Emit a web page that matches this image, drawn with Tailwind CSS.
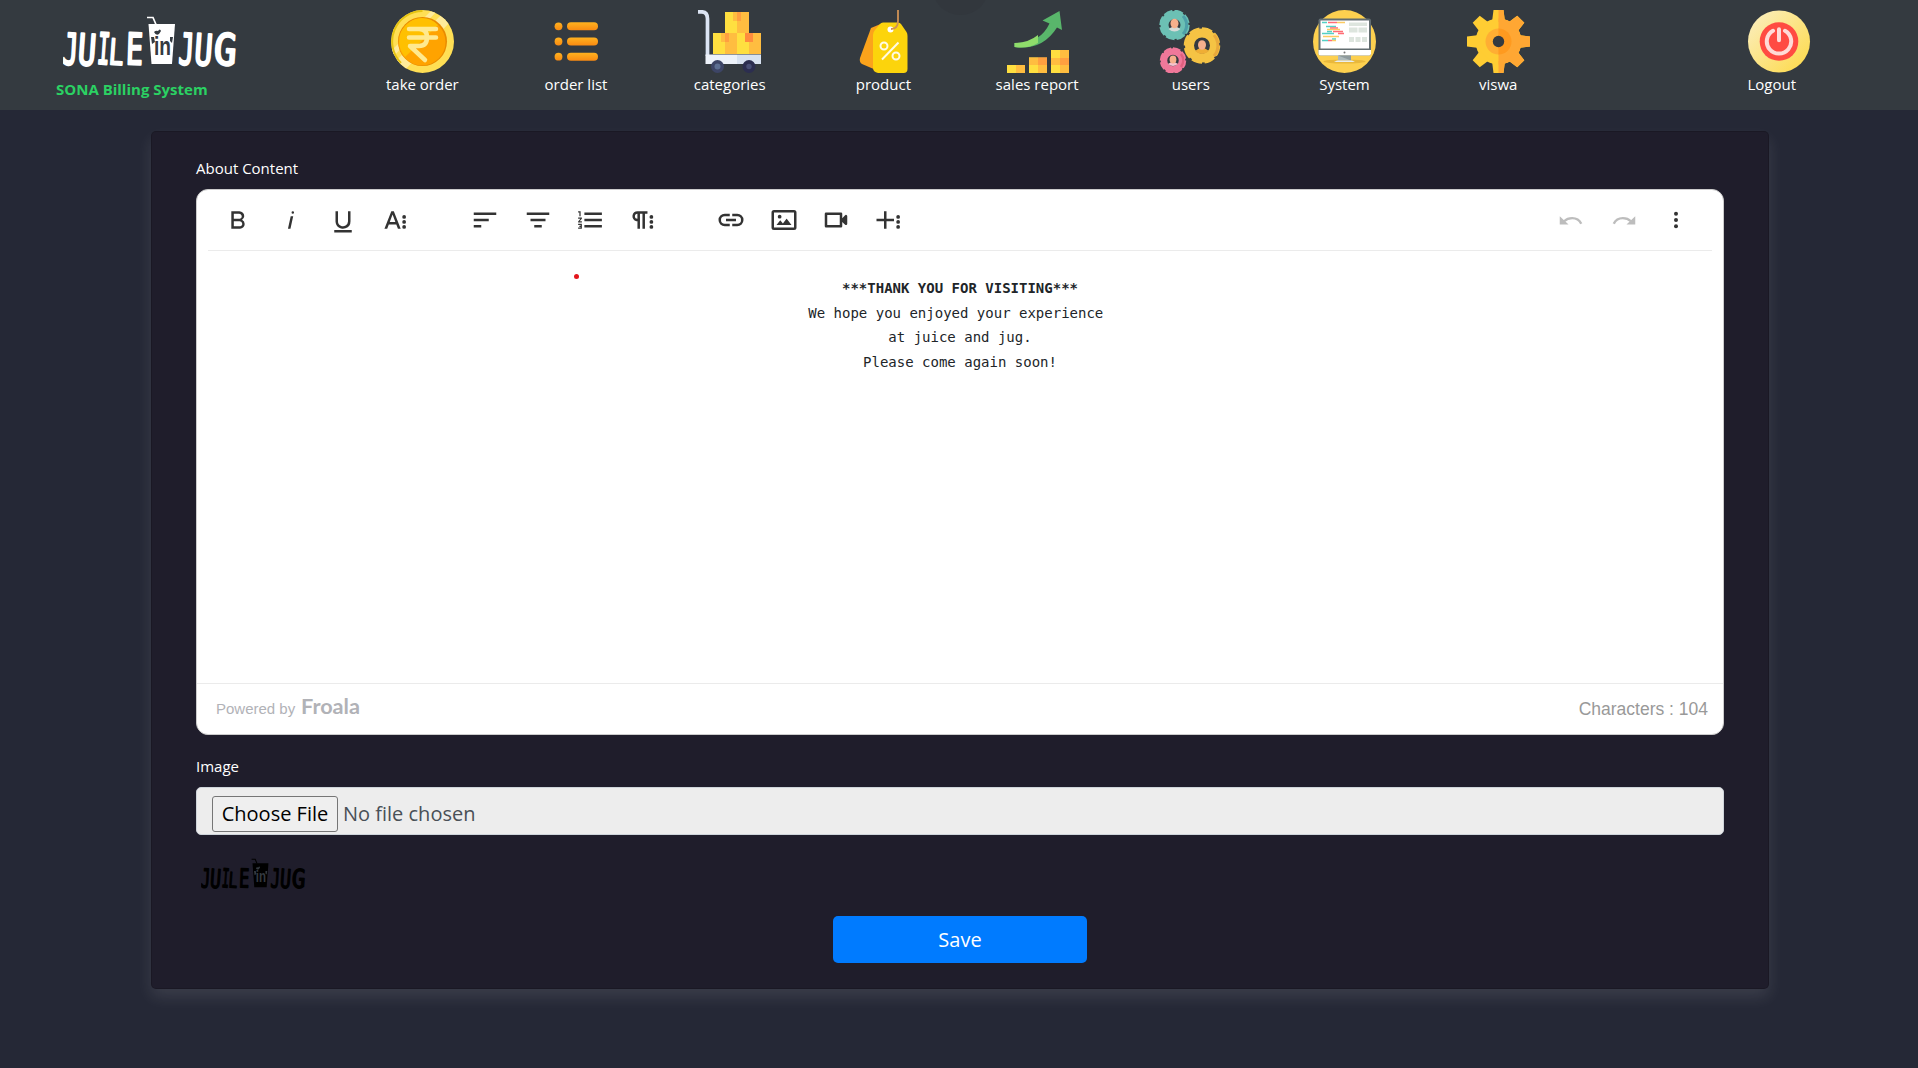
<!DOCTYPE html>
<html lang="en">
<head>
<meta charset="utf-8">
<title>SONA Billing System</title>
<script src="https://cdn.jsdelivr.net/npm/@tailwindcss/browser@4"></script>
</head>
<body class="h-[1068px] overflow-hidden bg-[#252836] font-['Open_Sans',sans-serif] text-[15px] text-white">

<svg class="hidden">
  <defs>
    <symbol id="logo" viewBox="0 0 176 52">
      <g fill="currentColor" stroke="currentColor" stroke-width="2.400" stroke-linejoin="round" font-family="DejaVu Sans Mono" font-size="43">
        <text transform="translate(-1 48) rotate(3) scale(.6 1)">J</text>
        <text transform="translate(14 48.500) rotate(4) scale(.7 1)">U</text>
        <text transform="translate(33.500 47.500) rotate(4) scale(.48 1)">I</text>
        <text transform="translate(45 48) rotate(4) scale(.58 .82)">L</text>
        <text transform="translate(62.500 48) rotate(2) scale(.66 1)">E</text>
        <text transform="translate(115 48) rotate(3) scale(.6 1)">J</text>
        <text transform="translate(130.500 48.500) rotate(4) scale(.7 1)">U</text>
        <text transform="translate(150 48) rotate(4) scale(.88 1)">G</text>
      </g>
      <path d="M84 1.500h6l3 7" fill="none" stroke="currentColor" stroke-width="1.700"/>
      <path d="M85.500 8H112l-3 40H88.500z" fill="currentColor"/>
      <g class="fill-[#343a40]">
        <path d="M91 16q2-2 4-1 2-3 3 0l-2 3q-3 2-5-2zM88 21l3 0 1 5-3 2zM107 21h3l-1 6-2-2z"/>
        <text x="91" y="39" font-family="Liberation Sans" font-weight="bold" font-size="26" textLength="17" lengthAdjust="spacingAndGlyphs">in</text>
      </g>
    </symbol>
  </defs>
</svg>

<header class="relative flex h-[110px] overflow-hidden bg-[#343a40]">
  <span class="absolute left-[932px] top-[-42px] size-[57px] rounded-full bg-[#32373d]"></span>
  <div class="w-[345.5px] shrink-0 pl-14 pt-4">
    <svg class="ml-[7px] h-[52px] w-[176px]"><use href="#logo"/></svg>
    <p class="mt-[10px] text-[15px] font-bold leading-[22px] text-[#2bd163]">SONA Billing System</p>
  </div>
  <nav class="relative flex shrink-0 pt-[10px] leading-[22px]">
    <a class="flex w-[153.7px] flex-col items-center">
      <svg class="size-[63px]" viewBox="0 0 63 63">
        <defs><clipPath id="coin"><circle cx="31.500" cy="31.500" r="31.500"/></clipPath></defs>
        <g clip-path="url(#coin)">
          <path fill="#ffdf55" d="M0 0h63v63H0z"/><path fill="#ffeb9b" d="M41 0l6 0L0 49v-8zM50 5l8 8L14 60l-9-9z"/>
          <path fill="none" stroke="#e6c412" stroke-width="2" d="M31.500 1A30.500 30.500 0 0 0 10 53"/>
        </g>
        <circle cx="31.500" cy="31.500" r="24.500" fill="#e98b00"/><circle cx="31" cy="32" r="23.500" fill="#ffa300"/>
        <path fill="#ffc000" d="M31 8a23.500 23.500 0 0 0-17 39L47 15A23 23 0 0 0 31 8z"/>
        <g fill="none" stroke="#ffe98f" stroke-width="4.500" stroke-linecap="round" stroke-linejoin="round"><path d="M18 19h27M18 27.500h27M18 19h10q8 0 8 8.500t-8 8.500H19l15 14"/></g>
      </svg>take order</a>
    <a class="flex w-[153.7px] flex-col items-center">
      <svg class="size-[63px]" viewBox="0 0 63 63">
        <defs><linearGradient id="amber" x2="0" y2="1"><stop stop-color="#ffb21f"/><stop offset="1" stop-color="#f98a12"/></linearGradient></defs>
        <g fill="url(#amber)"><circle cx="13.500" cy="16.300" r="3.900"/><circle cx="13.500" cy="31.500" r="3.900"/><circle cx="13.500" cy="46.700" r="3.900"/><rect x="22" y="12.300" width="31" height="8" rx="4"/><rect x="22" y="27.500" width="31" height="8" rx="4"/><rect x="22" y="42.700" width="31" height="8" rx="4"/></g>
      </svg>order list</a>
    <a class="flex w-[153.7px] flex-col items-center">
      <svg class="size-[63px]" viewBox="0 0 63 63">
        <path d="M0 1.800h3.500q6 0 6 7V46" fill="none" stroke="#dbe4f3" stroke-width="3.700"/>
        <path fill="#ffdf40" d="M27 2h12v21H27zM15 23h12v21H15zM39 23h12v21H39z"/><path fill="#ffbd40" d="M39 2h12v21H39zM27 23h12v21H27zM51 23h12v21H51z"/>
        <path fill="#ffbd40" d="M35 2h4v9h-4zM23 23h4v9h-4z"/><path fill="#ff9f40" d="M39 2h4v9h-4zM27 23h4v9h-4z"/><path fill="#ff8c3d" d="M47 23h8v9h-8z"/>
        <path fill="#edf2fa" d="M7.500 44.500H39V54H7.500z"/><path fill="#d8e2f1" d="M39 44.500h24V54H39z"/>
        <circle cx="19.500" cy="56.500" r="6.500" fill="#3d4566"/><circle cx="19.500" cy="56.500" r="3" fill="#5d6f92"/><circle cx="51" cy="56.500" r="6.500" fill="#2c2e50"/><circle cx="51" cy="56.500" r="2.700" fill="#484e75"/>
      </svg>categories</a>
    <a class="flex w-[153.7px] flex-col items-center">
      <svg class="size-[63px]" viewBox="0 0 63 63">
        <path fill="#fba31b" d="M31 13l-12 5L8 48q-1 4 2 6l14 6z"/>
        <path fill="#fcd40c" d="M31 12.500h15q2 0 3 1.500l5.500 8q1 1.500 1 4V59q0 4-4 4H26q-5-1-5-5V25q0-3 2-5l5-6q1-1.500 3-1.500z"/>
        <circle cx="38.500" cy="19.500" r="3" fill="#fff"/><path d="M46 0v11q0 8-7 8" fill="none" stroke="#cf9256" stroke-width="1.800"/>
        <g fill="none" stroke="#fffbe5" stroke-width="2"><circle cx="32" cy="36" r="3.500"/><circle cx="44" cy="46" r="3.500"/><path d="M30 49.500L46.500 32.500"/></g>
      </svg>product</a>
    <a class="flex w-[153.7px] flex-col items-center">
      <svg class="size-[63px]" viewBox="0 0 63 63">
        <path fill="#59b66b" d="M8.500 33Q34 34 43.500 13.500L36.500 10.500 53.500 1 56 20 51 17.500Q36 41 8.500 37z"/><path fill="#8fdc6b" d="M8.500 33Q22 33 32 25v8Q22 39 8.500 37z"/>
        <path fill="#ffdf40" d="M1 55h9v8H1zM23 47.500h9V63h-9zM45 40h9v23h-9z"/><path fill="#ffbd40" d="M10 55h9v8h-9zM32 47.500h9V63h-9zM54 40h9v23h-9zM23 47.500h9V55h-9zM45 48h9v7h-9z"/><path fill="#ff9f40" d="M32 47.500h9V55h-9zM54 48h9v7h-9z"/>
      </svg>sales report</a>
    <a class="flex w-[153.7px] flex-col items-center">
      <svg class="size-[63px]" viewBox="0 0 63 63">
        <g fill="none">
          <circle cx="15.500" cy="15" r="10" stroke="#6cc0b4" stroke-width="8"/><circle cx="15.500" cy="15" r="14" stroke="#6cc0b4" stroke-width="2.500" pathLength="80" stroke-dasharray="8 2"/><path d="M24 6a13 13 0 0 1 0 18" stroke="#4d9fa8" stroke-width="3"/>
          <circle cx="43" cy="35.500" r="12.500" stroke="#f5c344" stroke-width="9"/><circle cx="43" cy="35.500" r="17" stroke="#f5c344" stroke-width="2.500" pathLength="80" stroke-dasharray="8 2"/><path d="M55 25a16 16 0 0 1 0 21" stroke="#e9a93b" stroke-width="3"/>
          <circle cx="14" cy="50.500" r="9" stroke="#f0789a" stroke-width="6.500"/><circle cx="14" cy="50.500" r="12" stroke="#f0789a" stroke-width="2.500" pathLength="80" stroke-dasharray="8 2"/><path d="M22 44a11 11 0 0 1 0 13" stroke="#e0607f" stroke-width="2.500"/>
        </g>
        <path fill="#d5dbd8" d="M9.500 19q6-5 12 0-6 5-12 0z"/><path fill="#efae35" d="M36 41q7-6 14 0-7 6-14 0z"/><path fill="#f6c3cf" d="M9 54q5-4 10 0-5 4-10 0z"/>
        <g fill="#f6b08c"><ellipse cx="15.500" cy="13.500" rx="4" ry="4.800"/><ellipse cx="43" cy="35" rx="4" ry="4.800"/><ellipse cx="14" cy="49.500" rx="3.400" ry="4"/></g>
      </svg>users</a>
    <a class="flex w-[153.7px] flex-col items-center">
      <svg class="size-[63px]" viewBox="0 0 63 63">
        <circle cx="31.500" cy="31.500" r="31.500" fill="#fdd04f"/><ellipse cx="31.500" cy="51.500" rx="21" ry="2" fill="#e9b83c"/>
        <rect x="5.500" y="8.500" width="52.500" height="37" rx="2" fill="#626d70"/><path fill="#fff" d="M7.500 10.500H56V38.500H7.500z"/><path fill="#fff" d="M5.500 40H58v3.500q0 2-2 2H7.500q-2 0-2-2z"/>
        <circle cx="31.500" cy="42.500" r="1" fill="#777"/><path fill="#aebabb" d="M25 45.500h13v5H25z"/><path fill="#8e9a9c" d="M25 45.500h13v5z"/><path fill="#e9eeee" d="M24 50.500h15l3 1.500H21z"/>
        <g fill="none" stroke-width="1.300"><path stroke="#54cfc5" d="M9 12.500h5M13 16.500h10M14 21.500h5M9 23.500h12M9 30.500h6M19 29h4"/><path stroke="#ff6d75" d="M15 12.500h9M17 18h8M20 21.500h10M25 23.500h6M15 30.500h4"/><path stroke="#fccb63" d="M24 12.500h8M14 19.500h13M10 26.500h16M19 30.500h4"/></g>
        <path fill="#dde5de" d="M36 12.500h18v3.500H36zM36 17.500h8.500v5H36zM45.500 17.500H54v5h-8.500zM36 27h5v5h-5zM42.500 27h5v5h-5zM49 27h5v5h-5z"/>
      </svg>System</a>
    <a class="flex w-[153.7px] flex-col items-center">
      <svg class="size-[63px]" viewBox="0 0 63 63">
        <defs>
          <g id="cog"><circle cx="31.500" cy="31.500" r="23"/>
            <path id="tooth" d="M26.500 0h10l1.500 12H25z"/><use href="#tooth" transform="rotate(45 31.500 31.500)"/><use href="#tooth" transform="rotate(90 31.500 31.500)"/><use href="#tooth" transform="rotate(135 31.500 31.500)"/><use href="#tooth" transform="rotate(180 31.500 31.500)"/><use href="#tooth" transform="rotate(225 31.500 31.500)"/><use href="#tooth" transform="rotate(270 31.500 31.500)"/><use href="#tooth" transform="rotate(315 31.500 31.500)"/></g>
          <clipPath id="half"><path d="M31.500 0H63v63H31.500z"/></clipPath>
        </defs>
        <use href="#cog" fill="#ffcd33"/><circle cx="31.500" cy="31.500" r="13" fill="#ffae33"/>
        <g clip-path="url(#half)"><use href="#cog" fill="#ffa733"/><circle cx="31.500" cy="31.500" r="13" fill="#ff9a1f"/></g><circle cx="31.500" cy="31.500" r="5.700" fill="#343a40"/>
      </svg>viswa</a>
  </nav>
  <a class="relative ml-[172.5px] flex flex-col items-start pt-[10px] leading-[22px]">
    <svg class="size-[63px]" viewBox="0 0 63 63">
      <defs><linearGradient id="gold" x2="1" y2="1"><stop offset=".1" stop-color="#fbedb8"/><stop offset=".9" stop-color="#fddb52"/></linearGradient></defs>
      <circle cx="31" cy="31.500" r="31" fill="url(#gold)"/><circle cx="31" cy="31.500" r="19.300" fill="#ff4b42"/>
      <g fill="none" stroke="#ffdbd7" stroke-width="4" stroke-linecap="round"><path d="M25 20.800a12.200 12.200 0 1 0 12 0M31 19.300v11"/></g>
    </svg>Logout</a>
</header>

<main class="ml-[151px] mt-[21px] h-[858px] w-[1618px] rounded-[5px] border border-black/15 bg-[#1f1d2b] px-11 pt-[25px] shadow-[0_8px_16px_rgba(255,255,255,0.1)]">
  <label class="block h-8 leading-[23px]">About Content</label>

  <section class="flex h-[546px] flex-col rounded-[12px] border border-[#ccc] bg-white text-[#333]">
    <div class="mx-[11px] flex h-[61px] shrink-0 items-start border-b border-[#ebebeb] pt-[15px]">
      <div class="ml-[15px] flex gap-[22.5px]">
        <svg class="size-[30px] fill-current" viewBox="0 0 24 24"><path fill-rule="evenodd" d="M15.250 11.800A3.680 3.680 0 0 0 17 9a3.930 3.930 0 0 0-3.860-4H6.650V19h7a3.740 3.740 0 0 0 3.700-3.780V15.100A3.640 3.640 0 0 0 15.250 11.800ZM8.650 7h4.200a2.090 2.090 0 0 1 2 1.300 2.090 2.090 0 0 1-1.370 2.610 2.230 2.230 0 0 1-.63.09H8.650Zm4.600 10H8.650V13h4.600a2.090 2.090 0 0 1 2 1.300 2.090 2.090 0 0 1-1.370 2.610A2.230 2.230 0 0 1 13.250 17Z"/></svg>
        <svg class="size-[30px] fill-current" viewBox="0 0 24 24"><path d="M11.760 9h2l-2.200 10h-2Zm1.680-4a1 1 0 1 0 1 1 1 1 0 0 0-1-1Z"/></svg>
        <svg class="size-[30px] fill-current" viewBox="0 0 24 24"><path d="M19 20v2H5V20Zm-3-6.785a4 4 0 0 1-5.740 3.400A3.750 3.750 0 0 1 8 13.085V5H6v8.215a6 6 0 0 0 8 5.440 5.851 5.851 0 0 0 4-5.650V5H16Z"/></svg>
        <svg class="size-[30px] fill-current" viewBox="0 0 24 24"><path fill-rule="evenodd" d="M13.550 19h2.200L10.250 5h-2L2.750 19h2.200l1.300-3.500h6ZM7 13.500l2.250-6 2.250 6z"/><circle cx="18.500" cy="9.500" r="1.500"/><circle cx="18.500" cy="13.500" r="1.500"/><circle cx="18.500" cy="17.500" r="1.500"/></svg>
      </div>
      <div class="ml-[59.5px] flex gap-[22.5px]">
        <svg class="size-[30px] fill-current" viewBox="0 0 24 24"><path d="M3 18h6v-2H3zM3 6v2h18V6zM3 13h12v-2H3z"/></svg>
        <svg class="size-[30px] fill-current" viewBox="0 0 24 24"><path d="M9 18h6v-2H9zM3 6v2h18V6zM6 13h12v-2H6z"/></svg>
        <svg class="size-[30px] fill-current" viewBox="0 0 24 24"><path d="M2.500 16h2v.5h-1v1h1V18h-2v1h3V15h-3Zm1-7h1V5h-2V6h1Zm-1 2H4.300L2.500 13.100V14h3V13H3.700l1.800-2.100V10h-3Zm5-5V8h14V6Zm0 12h14V16H7.500Zm0-5h14V11H7.500Z"/></svg>
        <svg class="size-[30px] fill-current" viewBox="0 0 24 24"><path fill-rule="evenodd" d="M7.680 5a4.100 4.100 0 0 0-4.070 3.180 4 4 0 0 0 3.110 4.730 3.770 3.770 0 0 0 .85.09v6h2V7h2V19h2V7h2V5ZM5.530 9a2 2 0 0 1 2-2v4a2 2 0 0 1-2-2Z"/><circle cx="18.700" cy="9.500" r="1.500"/><circle cx="18.700" cy="13.500" r="1.500"/><circle cx="18.700" cy="17.500" r="1.500"/></svg>
      </div>
      <div class="ml-[58.5px] flex gap-[22.5px]">
        <svg class="size-[30px] fill-current" viewBox="0 0 24 24"><path d="M11 17H7A5 5 0 0 1 7 7h4V9H7a3 3 0 0 0 0 6h4ZM17 7H13V9h4a3 3 0 0 1 0 6H13v2h4A5 5 0 0 0 17 7Zm-1 4H8v2h8Z"/></svg>
        <svg class="size-[30px] fill-current" viewBox="0 0 24 24"><path fill-rule="evenodd" d="M4 4h16a2 2 0 0 1 2 2v12a2 2 0 0 1-2 2H4a2 2 0 0 1-2-2V6a2 2 0 0 1 2-2zm0 2v12h16V6z"/><path d="M14.200 11l3.800 5H6l3-3.900 2.100 2.700L14 11z"/><circle cx="8.500" cy="9.300" r="1.500"/></svg>
        <svg class="size-[30px] fill-current" viewBox="0 0 24 24"><path fill-rule="evenodd" d="M15 8v8H5V8H15m2 2.500V7a1 1 0 0 0-1-1H4A1 1 0 0 0 3 7V17a1 1 0 0 0 1 1H16a1 1 0 0 0 1-1V13.500l2.290 2.290A1 1 0 0 0 21 15.080V8.910a1 1 0 0 0-1.710-.71Z"/></svg>
        <svg class="size-[30px] fill-current" viewBox="0 0 24 24"><path d="M16 13H10v6H8v-6H2V11H8V5h2v6h6z"/><circle cx="19.300" cy="9.500" r="1.500"/><circle cx="19.300" cy="13.500" r="1.500"/><circle cx="19.300" cy="17.500" r="1.500"/></svg>
      </div>
      <div class="ml-auto mr-[21px] flex gap-[22.5px]">
        <svg class="size-[30px] text-[#bdbdbd]" viewBox="0 0 24 24"><path fill="currentColor" d="M3 9v6.500h7z"/><path d="M6.500 13Q9 10.500 13 10.500q5 0 7.200 4.500" fill="none" stroke="currentColor" stroke-width="1.900"/></svg>
        <svg class="size-[30px] text-[#bdbdbd]" viewBox="0 0 24 24"><path fill="currentColor" d="M21 9v6.500h-7z"/><path d="M17.500 13Q15 10.500 11 10.500q-5 0-7.200 4.500" fill="none" stroke="currentColor" stroke-width="1.900"/></svg>
        <svg class="size-[30px] fill-current" viewBox="0 0 24 24"><circle cx="12" cy="7" r="1.600"/><circle cx="12" cy="12" r="1.600"/><circle cx="12" cy="17" r="1.600"/></svg>
      </div>
    </div>

    <div class="relative flex-1 pt-[25px] text-center font-['DejaVu_Sans_Mono',monospace] text-[14px] leading-[24.5px] text-[#212529]">
      <span class="absolute left-[377px] top-[23px] size-[5px] rounded-full bg-[#e3151c]"></span>
      <p class="font-bold">***THANK YOU FOR VISITING***</p>
      <p>We hope you enjoyed your experience&nbsp;</p>
      <p>at juice and jug.</p>
      <p>Please come again soon!</p>
    </div>

    <footer class="flex h-[51px] shrink-0 items-center justify-between border-t border-[#ebebeb] pl-[19px] pr-[15px] pt-px font-['Liberation_Sans',sans-serif]">
      <div class="flex items-center text-[15px] text-[#b1b2b7]">
        <span>Powered by</span>
        <svg class="mb-[5px] ml-[6px] h-[24px] w-[66px] overflow-visible fill-current"><text x="0" y="19" font-family="Lato" font-weight="bold" font-size="20" textLength="59" lengthAdjust="spacingAndGlyphs">Froala</text></svg>
      </div>
      <span class="text-[17.5px] text-[#999]">Characters : 104</span>
    </footer>
  </section>

  <label class="mt-5 block h-8 leading-[23px]">Image</label>
  <div class="flex h-12 items-start rounded-[5px] border border-[#ced4da] bg-[#ededed] pl-[15px] pt-2 text-[20px] text-[#495057]">
    <button class="h-9 w-[126px] rounded-[3px] border border-[#767676] bg-[#efefef] leading-[34px] text-black">Choose File</button>
    <span class="ml-[5px] leading-9">No file chosen</span>
  </div>
  <svg class="ml-[5px] mt-[23px] h-[32px] w-[106px] text-black"><use href="#logo"/></svg>
  <button class="mx-auto mt-[26px] block h-[47px] w-[254px] rounded-[5px] bg-[#007bff] text-[20px] leading-[47px] text-white">Save</button>
</main>
</body>
</html>
